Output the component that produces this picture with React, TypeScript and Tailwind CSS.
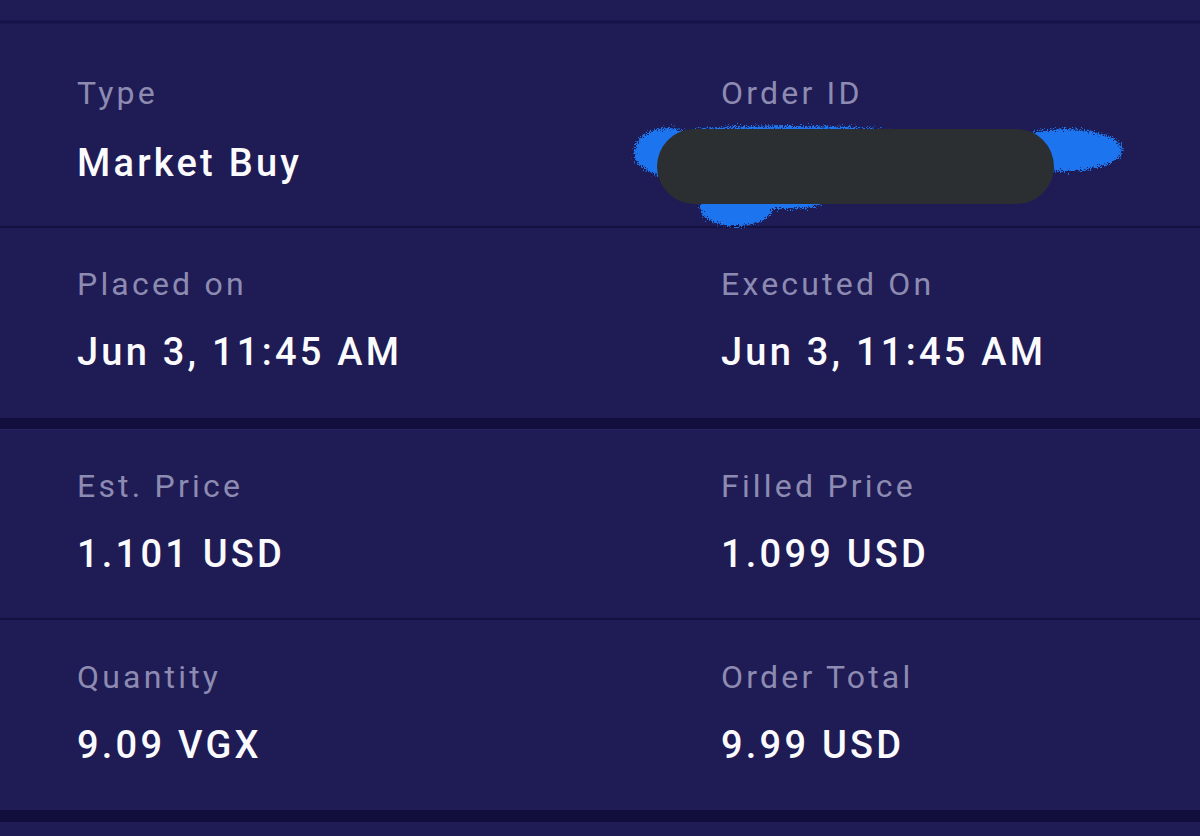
import React from 'react';

interface Field {
  label: string;
  value: string;
}

interface RowProps {
  left: Field;
  right: Field;
  className: string;
  gap: string;
  redact?: boolean;
}

const Redaction: React.FC = () => (
  <svg
    className="absolute left-[620px] top-[86px] w-[520px] h-[130px]"
    viewBox="0 0 520 130"
    fill="none"
  >
    <defs>
      <filter id="scribble" x="-10%" y="-30%" width="120%" height="160%">
        <feTurbulence type="fractalNoise" baseFrequency="0.7" numOctaves="3" seed="4" result="noise" />
        <feDisplacementMap in="SourceGraphic" in2="noise" scale="11" xChannelSelector="R" yChannelSelector="G" />
      </filter>
    </defs>
    <g filter="url(#scribble)" fill="#1c74ee">
      <ellipse cx="48" cy="42" rx="34" ry="24" />
      <ellipse cx="170" cy="24" rx="110" ry="8" />
      <ellipse cx="445" cy="40" rx="57" ry="21" />
      <ellipse cx="116" cy="98" rx="36" ry="18" />
      <ellipse cx="165" cy="92" rx="38" ry="7" />
    </g>
    <rect x="37" y="19" width="397" height="75" rx="37.5" fill="#2b2f32" />
  </svg>
);

const Cell: React.FC<{ field: Field; gap: string }> = ({ field, gap }) => (
  <div className={`flex flex-col ${gap}`}>
    <div className="text-[32px] leading-[36px] tracking-[0.1em] text-[#8d8bb1]">{field.label}</div>
    <div className="text-[38px] leading-[44px] tracking-[0.085em] font-medium text-[#fbfbfe] whitespace-nowrap">
      {field.value}
    </div>
  </div>
);

const Row: React.FC<RowProps> = ({ left, right, className, gap, redact }) => (
  <div className={`relative grid grid-cols-[644px_1fr] pl-[77px] ${className}`}>
    <Cell field={left} gap={gap} />
    <Cell field={right} gap={gap} />
    {redact && <Redaction />}
  </div>
);

const App: React.FC = () => {
  return (
    <div
      className="w-[1200px] h-[836px] overflow-hidden bg-[#1f1b55]"
      style={{ fontFamily: 'Roboto, "Noto Sans", sans-serif' }}
    >
      {/* header shadow edge */}
      <div className="h-[20px]" />
      <div className="h-[4px] bg-gradient-to-b from-[#1b1850] via-[#150f46] to-[#1d1a52]" />

      <Row
        left={{ label: 'Type', value: 'Market Buy' }}
        right={{ label: 'Order ID', value: '' }}
        className="pt-[51px] pb-[41px]"
        gap="gap-[30px]"
        redact
      />
      <div className="h-[2px] bg-[#14103f]" />

      <Row
        left={{ label: 'Placed on', value: 'Jun 3, 11:45 AM' }}
        right={{ label: 'Executed On', value: 'Jun 3, 11:45 AM' }}
        className="pt-[38px] pb-[44px]"
        gap="gap-[28px]"
      />
      <div className="h-[11px] bg-[#120f3e]" />
      <div className="h-[1px] bg-[#262362]" />

      <Row
        left={{ label: 'Est. Price', value: '1.101 USD' }}
        right={{ label: 'Filled Price', value: '1.099 USD' }}
        className="pt-[38px] pb-[42px]"
        gap="gap-[28px]"
      />
      <div className="h-[2px] bg-[#14103f]" />

      <Row
        left={{ label: 'Quantity', value: '9.09 VGX' }}
        right={{ label: 'Order Total', value: '9.99 USD' }}
        className="pt-[39px] pb-[43px]"
        gap="gap-[28px]"
      />
      <div className="h-[12px] bg-[#110d3d]" />
    </div>
  );
};

export default App;
